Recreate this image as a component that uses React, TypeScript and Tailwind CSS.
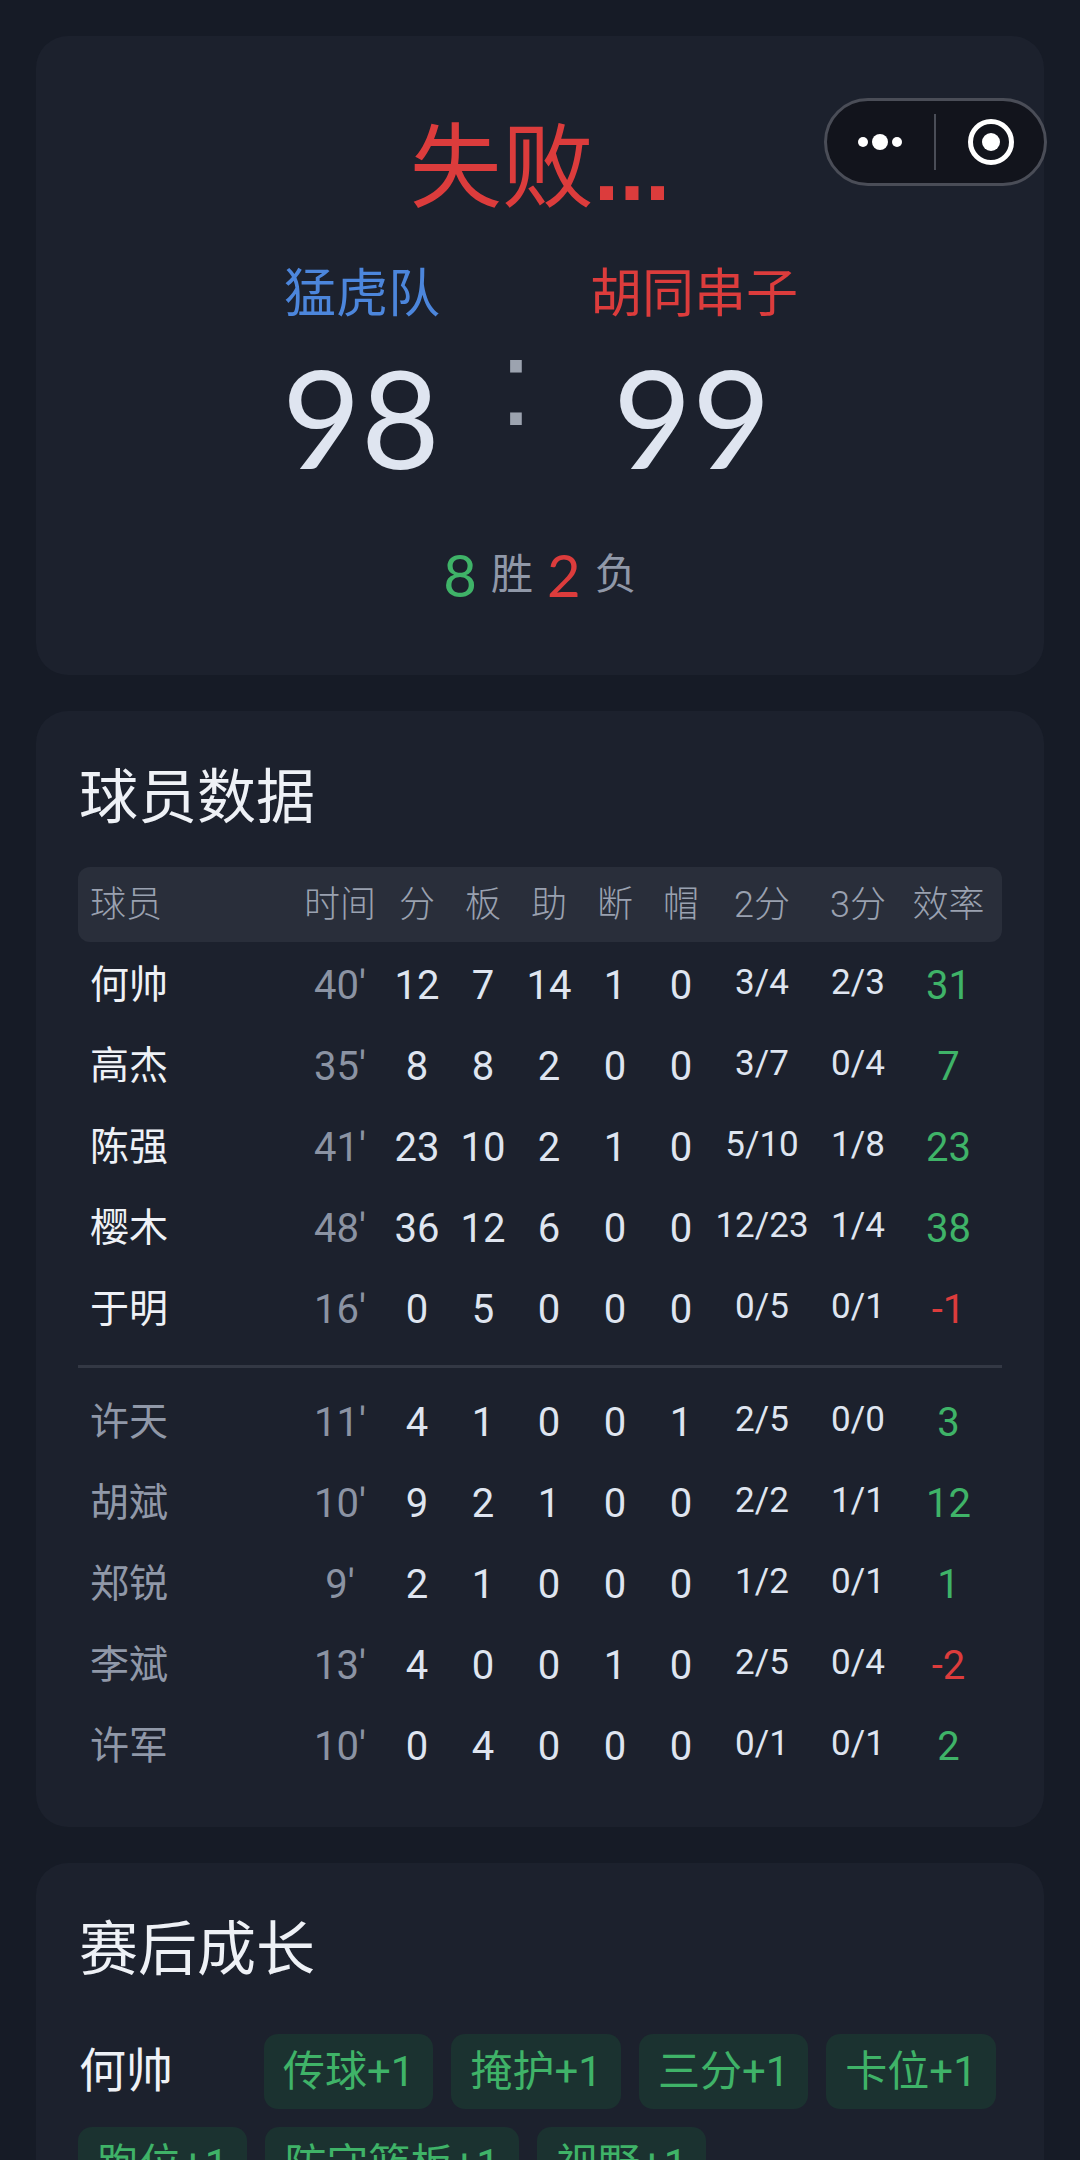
const players = [
  { name: "何帅", time: "40'", pts: "12", reb: "7", ast: "14", stl: "1", blk: "0", two: "3/4", three: "2/3", eff: 31 },
  { name: "高杰", time: "35'", pts: "8", reb: "8", ast: "2", stl: "0", blk: "0", two: "3/7", three: "0/4", eff: 7 },
  { name: "陈强", time: "41'", pts: "23", reb: "10", ast: "2", stl: "1", blk: "0", two: "5/10", three: "1/8", eff: 23 },
  { name: "樱木", time: "48'", pts: "36", reb: "12", ast: "6", stl: "0", blk: "0", two: "12/23", three: "1/4", eff: 38 },
  { name: "于明", time: "16'", pts: "0", reb: "5", ast: "0", stl: "0", blk: "0", two: "0/5", three: "0/1", eff: -1 },
];

const bench = [
  { name: "许天", time: "11'", pts: "4", reb: "1", ast: "0", stl: "0", blk: "1", two: "2/5", three: "0/0", eff: 3 },
  { name: "胡斌", time: "10'", pts: "9", reb: "2", ast: "1", stl: "0", blk: "0", two: "2/2", three: "1/1", eff: 12 },
  { name: "郑锐", time: "9'", pts: "2", reb: "1", ast: "0", stl: "0", blk: "0", two: "1/2", three: "0/1", eff: 1 },
  { name: "李斌", time: "13'", pts: "4", reb: "0", ast: "0", stl: "1", blk: "0", two: "2/5", three: "0/4", eff: -2 },
  { name: "许军", time: "10'", pts: "0", reb: "4", ast: "0", stl: "0", blk: "0", two: "0/1", three: "0/1", eff: 2 },
];

const headers = ["时间", "分", "板", "助", "断", "帽", "2分", "3分", "效率"];
const gridCols = "grid grid-cols-[204px_88px_66px_66px_66px_66px_66px_96px_96px_85px] items-center";

type Player = (typeof players)[number];

function Row({ p, dim }: { p: Player; dim?: boolean }) {
  return (
    <div className={`${gridCols} h-[81px] pl-[14px] text-center text-[40px] text-[#dfe5f0]`}>
      <div className={`text-left text-[39px] -ml-[2px] ${dim ? "text-[#9098a8]" : "text-[#eef1f6]"}`}>{p.name}</div>
      <div className="text-[#8b93a3]">{p.time}</div>
      <div>{p.pts}</div>
      <div>{p.reb}</div>
      <div>{p.ast}</div>
      <div>{p.stl}</div>
      <div>{p.blk}</div>
      <div className="text-[35px] -mt-[4px]">{p.two}</div>
      <div className="text-[35px] -mt-[4px]">{p.three}</div>
      <div className={p.eff < 0 ? "text-[#dc3c3c]" : "text-[#3fb368]"}>{p.eff}</div>
    </div>
  );
}

function Chip({ label }: { label: string }) {
  return (
    <span className="h-[75px] rounded-[14px] bg-[#1b3230] px-[19px] flex items-center text-[42px] text-[#3fb368] whitespace-nowrap">
      {label}
    </span>
  );
}

export default function App() {
  return (
    <div className="relative h-[2160px] overflow-hidden bg-[#161b26] px-[36px] pt-[36px] flex flex-col gap-[36px] font-[Roboto,'Noto_Sans_CJK_SC',sans-serif]">
      {/* capsule */}
      <div className="absolute left-[824px] top-[98px] w-[223px] h-[88px] rounded-full bg-[#12141c] border-[3px] border-[#4a4d57] flex items-center">
        <div className="flex-1 flex items-center justify-center gap-[4px]">
          <span className="w-[10px] h-[10px] rounded-full bg-white" />
          <span className="w-[16px] h-[16px] rounded-full bg-white" />
          <span className="w-[10px] h-[10px] rounded-full bg-white" />
        </div>
        <div className="w-[2px] h-[56px] bg-[#4a4d57]" />
        <div className="flex-1 flex items-center justify-center pl-[2px]">
          <span className="w-[46px] h-[46px] rounded-full border-[5px] border-white flex items-center justify-center">
            <span className="w-[18px] h-[18px] rounded-full bg-white" />
          </span>
        </div>
      </div>

      {/* result */}
      <div className="h-[639px] rounded-[32px] bg-[#1c212d] flex flex-col items-center shrink-0">
        <div className="mt-[72px] text-[92px] leading-[120px] text-[#dc3c3c] font-['Liberation_Sans','Noto_Sans_CJK_SC',sans-serif]">
          失败<span className="font-bold">...</span>
        </div>
        <div className="mt-[32px] self-start ml-[160px] flex text-[52px] leading-[70px]">
          <div className="w-[332px] text-center text-[#4c86dc]">猛虎队</div>
          <div className="w-[332px] text-center text-[#dc3c3c]">胡同串子</div>
        </div>
        <div className="mt-[12px] self-start ml-[187px] flex items-center text-[136px] leading-[150px] text-[#dfe5f0] font-[Lato,sans-serif]">
          <div className="w-[276px] text-center">98</div>
          <div className="w-[24px] text-center text-[#9ca3af] text-[122px] -mt-[68px] font-['Liberation_Sans',sans-serif]">:</div>
          <div className="w-[338px] text-center">99</div>
        </div>
        <div className="mt-[53px] flex items-center gap-[14px] text-[42px] text-[#9098a8] leading-[60px]">
          <span className="text-[58px] font-[Lato,sans-serif] text-[#3fb368]">8</span>
          <span>胜</span>
          <span className="text-[58px] font-[Lato,sans-serif] text-[#dc3c3c]">2</span>
          <span>负</span>
        </div>
      </div>

      {/* stats */}
      <div className="h-[1116px] rounded-[32px] bg-[#1c212d] pt-[47px] px-[42px] shrink-0">
        <div className="text-[59px] leading-[80px] pl-[1px] text-[#eef1f6]">球员数据</div>
        <div className={`${gridCols} mt-[29px] h-[75px] rounded-[12px] bg-[#292e3a] pl-[14px] text-center text-[36px] font-light text-[#9aa1b0]`}>
          <div className="text-left -ml-[2px]">球员</div>
          {headers.map((h) => (
            <div key={h}>{h}</div>
          ))}
        </div>
        <div className="mt-[3px]">
          {players.map((p) => (
            <Row key={p.name} p={p} />
          ))}
        </div>
        <div className="mt-[15px] mb-[14px] h-[3px] bg-[#333844]" />
        <div>
          {bench.map((p) => (
            <Row key={p.name} p={p} dim />
          ))}
        </div>
      </div>

      {/* growth */}
      <div className="flex-1 rounded-[32px] bg-[#1c212d] pt-[47px] px-[42px]">
        <div className="text-[59px] leading-[80px] pl-[1px] text-[#eef1f6]">赛后成长</div>
        <div className="mt-[44px] flex flex-wrap items-center gap-[18px]">
          <span className="w-[168px] pl-[1px] text-[47px] text-[#eef1f6]">何帅</span>
          <Chip label="传球+1" />
          <Chip label="掩护+1" />
          <Chip label="三分+1" />
          <Chip label="卡位+1" />
          <Chip label="跑位+1" />
          <Chip label="防守篮板+1" />
          <Chip label="视野+1" />
        </div>
      </div>
    </div>
  );
}
